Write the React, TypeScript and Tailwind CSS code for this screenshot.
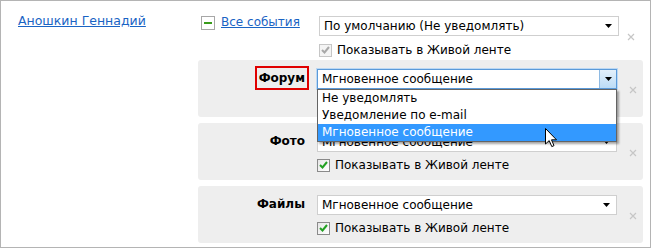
import React from "react";

const Arrow = () => (
  <svg width="7" height="4" viewBox="0 0 7 4" className="block">
    <path d="M0 0 L7 0 L3.5 4 Z" fill="#000" />
  </svg>
);

const CloseX = () => (
  <svg width="8" height="8" viewBox="0 0 8 8" className="block">
    <path d="M1 1 L7 7 M7 1 L1 7" stroke="#c6c6c6" strokeWidth="1.2" />
  </svg>
);

const Checkbox = ({ disabled }: { disabled?: boolean }) => (
  <span
    className={`w-[13px] h-[13px] border flex items-center justify-center shrink-0 ${
      disabled
        ? "border-[#c6c6c6] bg-[#f4f4f4]"
        : "border-[#8a8a8a] bg-gradient-to-br from-[#e6e6e6] to-white"
    }`}
  >
    <svg width="9" height="8" viewBox="0 0 9 8">
      <path
        d="M1 4 L3.5 6.5 L8 1"
        fill="none"
        stroke={disabled ? "#a8a8a8" : "#22a022"}
        strokeWidth="2"
      />
    </svg>
  </span>
);

const ShowInFeed = ({ disabled }: { disabled?: boolean }) => (
  <label className="flex items-center gap-[5px] h-[14px]">
    <Checkbox disabled={disabled} />
    <span className="leading-[14px]">Показывать в Живой ленте</span>
  </label>
);

const Select = ({ value, focused }: { value: string; focused?: boolean }) => (
  <div
    className={`relative w-[300px] h-[20px] bg-white flex items-center pl-[4px] border ${
      focused
        ? "border-[#5b9ad9] shadow-[0_0_0_1px_#bcd8f3]"
        : "border-[#cfcfcf]"
    }`}
  >
    <span className="leading-[18px] whitespace-nowrap">{value}</span>
    {focused ? (
      <span className="absolute right-0 top-0 h-full w-[17px] bg-gradient-to-b from-[#e3f0fb] to-[#bcdcf6] border-l border-[#8ebae3] flex items-center justify-center">
        <Arrow />
      </span>
    ) : (
      <span className="absolute right-[6px] top-[7px]">
        <Arrow />
      </span>
    )}
  </div>
);

const options = ["Не уведомлять", "Уведомление по e-mail", "Мгновенное сообщение"];

const Panel = ({
  label,
  marked,
  open,
}: {
  label: string;
  marked?: boolean;
  open?: boolean;
}) => (
  <div
    className={`h-[57px] bg-[#eeeeee] rounded-[3px] pt-[9px] flex ${
      open ? "relative z-10" : ""
    }`}
  >
    <div className="w-[107px] text-right">
      <span
        className={`inline-block font-bold leading-[16px] ${
          marked ? "outline-2 outline-[#e00000] outline-offset-[2px]" : ""
        }`}
      >
        {label}
      </span>
    </div>
    <div className="ml-[12px] flex flex-col gap-[6px]">
      <div className="relative">
        <Select value="Мгновенное сообщение" focused={open} />
        {open && (
          <ul className="absolute left-0 top-full w-[300px] bg-white border border-[#646464] shadow-[2px_2px_2px_rgba(0,0,0,0.35)]">
            {options.map((o, i) => (
              <li
                key={o}
                className={`h-[17px] leading-[17px] pl-[4px] ${
                  i === 2 ? "bg-[#3399ff] text-white" : ""
                }`}
              >
                {o}
              </li>
            ))}
          </ul>
        )}
      </div>
      <ShowInFeed />
    </div>
    <div className="ml-[12px] mt-[17px]">
      <CloseX />
    </div>
  </div>
);

export default function App() {
  return (
    <div className="w-[653px] h-[249px] bg-white text-black text-[12px] font-['DejaVu_Sans',sans-serif]">
      <div className="relative w-[651px] h-[248px] border border-[#b4b4b4] flex">
        <div className="w-[197px] pl-[17px] pt-[11px]">
          <a href="#" className="text-[#1a64c4] underline leading-[14px] text-[12.5px]">
            Аношкин Геннадий
          </a>
        </div>

        <div className="w-[445px] pt-[15px]">
          <div className="flex">
            <div className="w-[121px] pl-[3px] flex items-start gap-[6px]">
              <span className="w-[14px] h-[14px] border border-[#a7a7a7] bg-white flex items-center justify-center">
                <span className="w-[8px] h-[2px] bg-[#3a9c1c]" />
              </span>
              <a href="#" className="text-[#1a64c4] underline leading-[12px]">
                Все события
              </a>
            </div>
            <div className="flex flex-col gap-[7px]">
              <Select value="По умолчанию (Не уведомлять)" />
              <ShowInFeed disabled />
            </div>
            <div className="ml-[8px] mt-[17px]">
              <CloseX />
            </div>
          </div>

          <div className="mt-[3px] flex flex-col gap-[6px]">
            <Panel label="Форум" marked open />
            <Panel label="Фото" />
            <Panel label="Файлы" />
          </div>
        </div>

        <svg
          width="13"
          height="20"
          viewBox="0 0 13 20"
          className="absolute left-[544px] top-[127px] z-20"
        >
          <path
            d="M0.5 0.5 L0.5 16 L4.2 12.6 L6.8 18.6 L9 17.6 L6.5 11.8 L11.5 11.8 Z"
            fill="#fff"
            stroke="#000"
            strokeWidth="1"
            strokeLinejoin="round"
          />
        </svg>
      </div>
    </div>
  );
}
